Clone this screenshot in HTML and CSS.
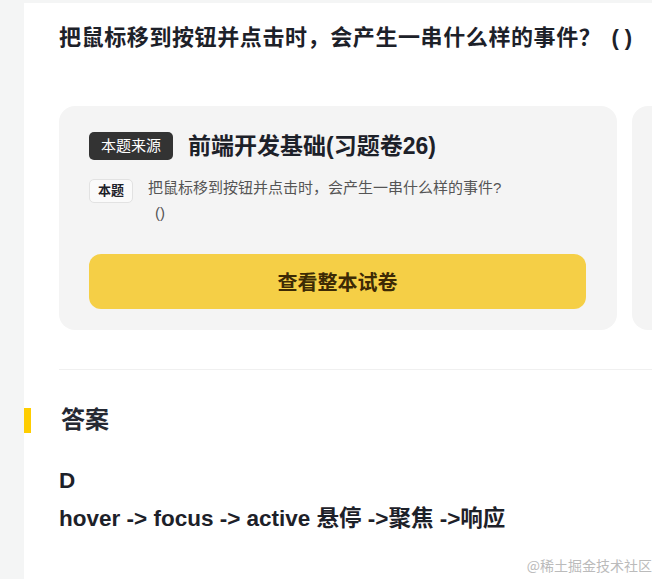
FILE: index.html
```html
<!DOCTYPE html>
<html lang="zh-CN">
<head>
  <meta charset="UTF-8" />
  <meta name="viewport" content="width=device-width, initial-scale=1.0" />
  <title>习题详情</title>
  <link rel="stylesheet" href="styles.css">
</head>
<body>
<div class="page">
  <div class="content">
    <h1 class="question">把鼠标移到按钮并点击时，会产生一串什么样的事件？<span class="paren">( )</span></h1>

    <div class="cards">
      <div class="card">
        <div class="source">
          <span class="source-tag">本题来源</span>
          <span class="source-name">前端开发基础(习题卷26)</span>
        </div>
        <div class="this-q">
          <span class="q-tag">本题</span>
          <p class="q-text">把鼠标移到按钮并点击时，会产生一串什么样的事件?<br><span class="q-paren">()</span></p>
        </div>
        <button class="view-btn">查看整本试卷</button>
      </div>
      <div class="card"></div>
    </div>

    <div class="divider"></div>

    <h2 class="answer-title"><span class="bar"></span>答案</h2>
    <p class="answer">D</p>
    <p class="answer">hover -&gt; focus -&gt; active 悬停 -&gt;聚焦 -&gt;响应</p>
  </div>
  <div class="watermark">@稀土掘金技术社区</div>
</div>
</body>
</html>
```

FILE: styles.css
```css
* {
  margin: 0;
  padding: 0;
  box-sizing: border-box;
}
body {
  background: #f4f5f5;
  font-family: "Liberation Sans", "Noto Sans CJK SC", sans-serif;
  color: #252933;
  overflow: hidden;
}
.page {
  position: relative;
  margin-left: 24px;
  margin-top: 3px;
  background: #fff;
  min-height: 576px;
  overflow: hidden;
}
.content {
  padding-left: 35px;
}
.question {
  font-size: 22px;
  font-weight: bold;
  line-height: 32px;
  padding-top: 19px;
  white-space: nowrap;
  color: #1d2129;
  letter-spacing: 0.6px;
}
.paren {
  margin-left: 10px;
  letter-spacing: 0;
}
.cards {
  display: flex;
  gap: 15px;
  margin-top: 52px;
}
.card {
  flex: 0 0 558px;
  height: 224px;
  background: #f4f4f4;
  border-radius: 16px;
  padding: 26px 31px 0 30px;
}
.source {
  display: flex;
  align-items: center;
  gap: 15px;
  height: 28px;
}
.source-tag {
  background: #333;
  color: #fff;
  font-size: 15px;
  line-height: 28px;
  padding: 0 12px;
  border-radius: 5px;
}
.source-name {
  font-size: 23px;
  font-weight: bold;
  line-height: 28px;
  color: #1d2129;
}
.this-q {
  display: flex;
  gap: 15px;
  margin-top: 15px;
}
.q-tag {
  flex: none;
  margin-top: 4px;
  height: 24px;
  line-height: 22px;
  padding: 0 8px;
  font-size: 13px;
  font-weight: bold;
  background: #fafafa;
  border: 1px solid #e2e2e2;
  border-radius: 5px;
  color: #1d2129;
}
.q-text {
  font-size: 15px;
  line-height: 25px;
  color: #555;
}
.q-paren {
  margin-left: 7px;
}
.view-btn {
  display: block;
  width: 100%;
  height: 55px;
  margin-top: 29px;
  border: none;
  border-radius: 12px;
  background: #f5cf46;
  color: #3d2a05;
  font-family: inherit;
  font-size: 20px;
  font-weight: bold;
}
.divider {
  height: 1px;
  background: #f0f0f0;
  margin-top: 39px;
}
.answer-title {
  display: flex;
  align-items: center;
  gap: 30px;
  margin-left: -35px;
  margin-top: 37px;
  font-size: 24px;
  line-height: 26px;
  color: #252933;
}
.bar {
  width: 7px;
  height: 25px;
  background: #fecd00;
}
.answer {
  font-size: 22.5px;
  font-weight: bold;
  line-height: 38px;
  color: #1d2129;
}
.answer:first-of-type {
  margin-top: 29px;
}
.watermark {
  position: absolute;
  right: 0;
  bottom: 4px;
  font-family: "Noto Sans CJK SC", sans-serif;
  font-size: 14px;
  color: #bbb;
}
```
